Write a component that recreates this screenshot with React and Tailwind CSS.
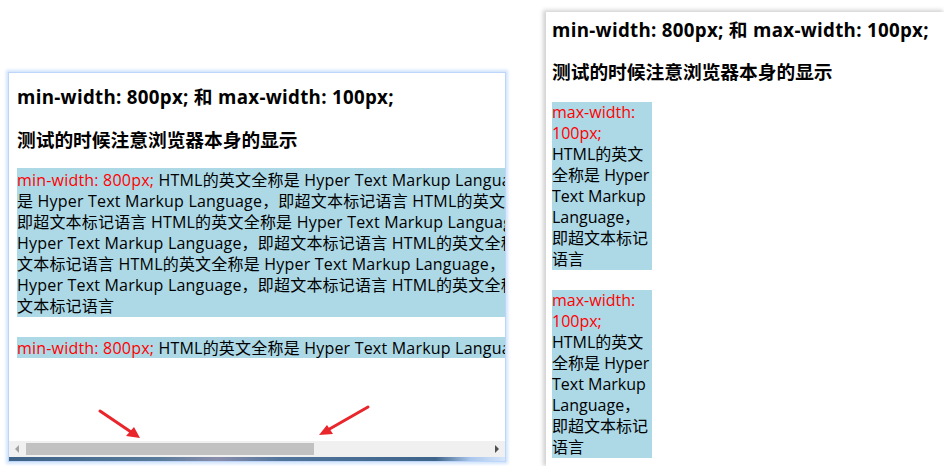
import React from 'react';

const font = { fontFamily: '"Open Sans", "Noto Sans CJK SC", sans-serif' };

const leftLines = [
  'HTML的英文全称是 Hyper Text Markup Language，即超文本标记语言 HTML的英文全称',
  '是 Hyper Text Markup Language，即超文本标记语言 HTML的英文全称是 Hyper Text Markup Language，',
  '即超文本标记语言 HTML的英文全称是 Hyper Text Markup Language，即超文本标记语言 HTML的英文全称是',
  'Hyper Text Markup Language，即超文本标记语言 HTML的英文全称是 Hyper Text Markup Language，即超',
  '文本标记语言 HTML的英文全称是 Hyper Text Markup Language，即超文本标记语言 HTML的英文全称是',
  'Hyper Text Markup Language，即超文本标记语言 HTML的英文全称是 Hyper Text Markup Language，即超',
  '文本标记语言',
];

const narrowLines = ['HTML的英文', '全称是 Hyper', 'Text Markup', 'Language，', '即超文本标记', '语言'];

const Headings = ({ first, gap }) => (
  <>
    <h3 className={`${first} text-[18.72px] leading-[24px] font-bold tracking-[0.3px] text-black whitespace-nowrap`}>
      min-width: 800px; 和 max-width: 100px;
    </h3>
    <h3 className={`${gap} text-[18.72px] leading-[24px] font-bold text-black whitespace-nowrap`}>
      测试的时候注意浏览器本身的显示
    </h3>
  </>
);

const NarrowBox = ({ className }) => (
  <p className={`${className} w-[100px] bg-[#add8e6] text-[16px] leading-[21px] text-black whitespace-nowrap`}>
    <span className="block text-[#ff0000]">max-width:</span>
    <span className="block text-[#ff0000]">100px;</span>
    {narrowLines.map((line, i) => (
      <span key={i} className="block">{line}</span>
    ))}
  </p>
);

export default function App() {
  return (
    <div className="relative w-[944px] h-[466px] overflow-hidden bg-white flex items-start" style={font}>
      {/* left window, scrolled */}
      <div className="ml-[9px] mt-[73px] w-[496px] flex flex-col shadow-[0_0_0_1px_#bcd5f8,0_0_3px_3px_#d3e4fc]">
        <div className="h-[368px] overflow-hidden bg-white pl-[8px]">
          <Headings first="mt-[12px]" gap="mt-[19px]" />
          <div className="mt-[16px] w-[800px] pt-[2px] bg-[#add8e6] text-[16px] leading-[21px] tracking-[0.2px] text-black">
            {leftLines.map((line, i) => (
              <div key={i} className="whitespace-nowrap">
                {i === 0 && <span className="text-[#ff0000]">min-width: 800px; </span>}
                {line}
              </div>
            ))}
          </div>
          <div className="mt-[20px] w-[800px] h-[21px] pt-[1px] overflow-hidden bg-[#add8e6] text-[16px] leading-[21px] tracking-[0.2px] text-black whitespace-nowrap">
            <span className="text-[#ff0000]">min-width: 800px; </span>
            HTML的英文全称是 Hyper Text Markup Language，即超文本标记语言
          </div>
        </div>

        {/* horizontal scrollbar */}
        <div className="h-[16px] bg-[#f0f0f0] flex items-center">
          <div className="w-[17px] h-full flex items-center justify-center">
            <svg width="5" height="8" viewBox="0 0 5 8"><path d="M4 0 L0 4 L4 8 Z" fill="#a3a3a3" /></svg>
          </div>
          <div className="w-[288px] h-[12px] bg-[#c1c1c1]" />
          <div className="flex-1" />
          <div className="w-[17px] h-full flex items-center justify-center">
            <svg width="5" height="8" viewBox="0 0 5 8"><path d="M1 0 L5 4 L1 8 Z" fill="#505050" /></svg>
          </div>
        </div>
        <div className="h-[4px] bg-[linear-gradient(90deg,#3d6287_0%,#587b9b_30%,#8a8dac_42%,#50749a_55%,#3f6489_86%,#a9c6ec_93%,#d6e6fb_100%)]" />
      </div>

      {/* right window */}
      <div className="ml-[41px] mt-[12px] flex-1 h-[454px] bg-white pl-[6px] shadow-[-2px_-1px_4px_1px_rgba(0,0,0,0.18)]">
        <Headings first="mt-[6px]" gap="mt-[18px]" />
        <NarrowBox className="mt-[18px]" />
        <NarrowBox className="mt-[20px]" />
      </div>

      {/* red annotation arrows */}
      <svg className="absolute left-0 top-0 pointer-events-none" width="944" height="466">
        <line x1="100" y1="411" x2="134" y2="434" stroke="#e8262b" strokeWidth="3" strokeLinecap="round" />
        <path d="M140 438 L126 436 L134 427 Z" fill="#e8262b" />
        <line x1="368" y1="407" x2="326" y2="431" stroke="#e8262b" strokeWidth="3" strokeLinecap="round" />
        <path d="M319 435 L327 425 L333 434 Z" fill="#e8262b" />
      </svg>
    </div>
  );
}
